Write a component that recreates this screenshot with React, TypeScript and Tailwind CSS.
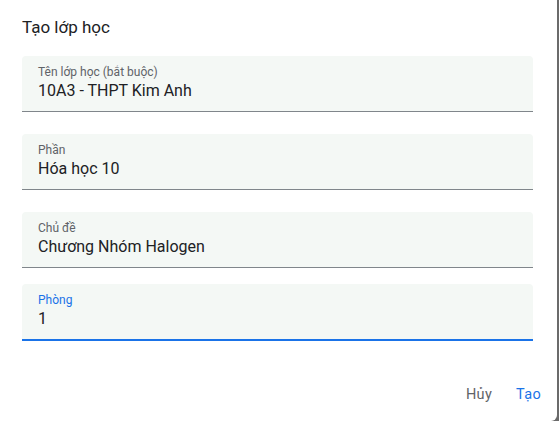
import React from "react";

type FieldProps = {
  label: string;
  value: string;
  focused?: boolean;
  className?: string;
};

function Field({ label, value, focused, className }: FieldProps) {
  return (
    <div
      className={`rounded-t-[4px] bg-[#f4f8f5] px-4 ${
        focused ? "border-b-2 border-[#1a73e8]" : "border-b border-[#80868b]"
      } ${className ?? ""}`}
    >
      <div
        className={`pt-[8px] text-[12px] leading-[16px] ${
          focused ? "text-[#1a73e8]" : "text-[#5f6368]"
        }`}
      >
        {label}
      </div>
      <div className="pb-[9px] text-[16px] leading-[22px] text-[#202124]">{value}</div>
    </div>
  );
}

export default function App() {
  return (
    <div className="h-[421px] w-[559px] bg-[#6b6b6b] font-['Roboto',sans-serif]">
      <div className="flex h-[421px] w-[557px] flex-col rounded-br-[6px] bg-white">
        <h2 className="pl-[22px] pt-[17px] text-[17px] leading-[21px] text-[#202124]">
          Tạo lớp học
        </h2>

        <div className="mt-[18px] flex w-[511px] flex-col pl-[22px] box-content">
          <Field label="Tên lớp học (bắt buộc)" value="10A3 - THPT Kim Anh" />
          <Field label="Phần" value="Hóa học 10" className="mt-[22px]" />
          <Field label="Chủ đề" value="Chương Nhóm Halogen" className="mt-[22px]" />
          <Field label="Phòng" value="1" focused className="mt-[16px]" />
        </div>

        <div className="mt-auto flex justify-end pb-[8px] pr-[4px]">
          <button
            type="button"
            className="h-[36px] px-3 text-[14.5px] tracking-[0.3px] text-[#5f6368]"
          >
            Hủy
          </button>
          <button
            type="button"
            className="h-[36px] px-3 text-[14.5px] tracking-[0.3px] text-[#1a73e8]"
          >
            Tạo
          </button>
        </div>
      </div>
    </div>
  );
}
